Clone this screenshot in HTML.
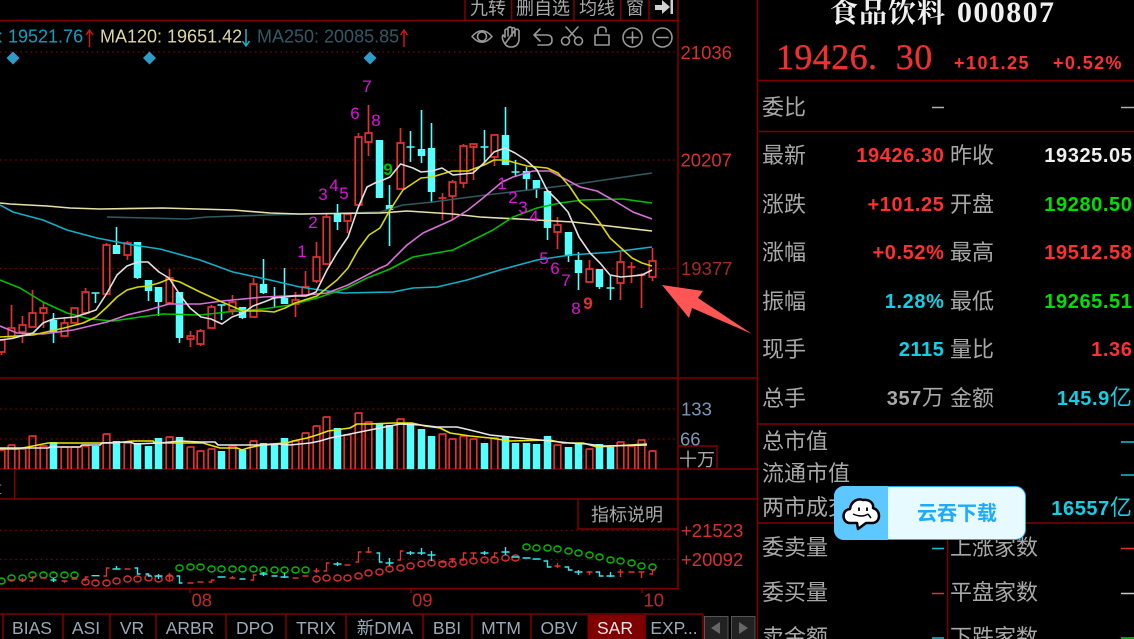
<!DOCTYPE html>
<html><head><meta charset="utf-8"><style>
html,body{margin:0;padding:0;background:#000;width:1134px;height:639px;overflow:hidden}
svg{display:block;font-family:"Liberation Sans","Noto Sans CJK SC",sans-serif}
.cn{font-size:22px;fill:#a8a8a8;font-family:"Noto Sans CJK SC",sans-serif}
.v{font-size:20px;font-weight:bold;letter-spacing:.6px;text-anchor:end}
.ax{font-size:18.5px;fill:#d83030}
.tab{font-size:17.5px;fill:#9aa8b6;text-anchor:middle}
.top{font-size:18px;fill:#a8a8a8;text-anchor:middle;font-family:"Noto Sans CJK SC",sans-serif}
.n{font-size:17px;fill:#e010e0;text-anchor:middle}
.m{fill:none;stroke-width:1.6;stroke-linejoin:round}
ellipse{rx:3.6px;ry:3px;fill:none;stroke-width:1.4}
</style></head><body>
<svg width="1134" height="639" viewBox="0 0 1134 639" xmlns="http://www.w3.org/2000/svg">
<rect width="1134" height="639" fill="#000"/>

<!-- frame -->
<g stroke="#800000" stroke-width="1.5" fill="none">
<path d="M0 20.5H678M678 0V589M757.5 0V639M0 378H757M0 469H757M0 499H757M0 588.5H678M14.7 469V499"/>
<path d="M465 0V20M511.7 0V20M574 0V20M620.7 0V20M649 0V20"/>
<path d="M678 446H717V469M578 499V529H678"/>
<path d="M190 588V593M411 588V593M642 588V593"/>
<path d="M757 80.5H1134M759 131.5H1134M757 424H1134M757 523H1134M947.6 523V639"/>
<path d="M0 614H703M3 614V639M63 614V639M110 614V639M156 614V639M226 614V639M286 614V639M346 614V639M423 614V639M472 614V639M531 614V639M645 614V639M703 614V639"/>
</g>
<g stroke="#800000" stroke-width="1.3" stroke-dasharray="1.5 3.6" fill="none">
<path d="M0 52H678M0 160H678M0 268.500H678M0 409H678M0 439H678M0 530.500H678M0 559.500H678"/>
</g>

<!-- top tabs -->
<text class="top" x="488" y="14.500">九转</text>
<text class="top" x="543" y="14.500">删自选</text>
<text class="top" x="597" y="14.500">均线</text>
<text class="top" x="635" y="14.500">窗</text>
<path d="M655 5H662V0L670 7L662 14V10H655ZM670.500 0H673V14H670.500Z" fill="#d0d0d0"/>

<!-- legend -->
<text x="-2" y="42.500" font-size="18" fill="#12a0c0">: 19521.76</text>
<path d="M89.500 47V31M86 35L89.500 30L93 35" fill="none" stroke="#c81818" stroke-width="1.5"/>
<text x="100" y="42.500" font-size="18" fill="#e0d8a0">MA120: 19651.42</text>
<path d="M246 29V45M242.500 41L246 46L249.500 41" fill="none" stroke="#20b0c8" stroke-width="1.500"/>
<text x="257" y="42.500" font-size="18" fill="#2f5a68">MA250: 20085.85</text>
<path d="M404 47V31M400.500 35L404 30L407.500 35" fill="none" stroke="#c81818" stroke-width="1.5"/>

<!-- tool icons -->
<g fill="none" stroke="#979797" stroke-width="1.6" stroke-linecap="round" stroke-linejoin="round">
<path d="M472 36.500Q482 25 492 36.500Q482 48 472 36.500Z"/><circle cx="482" cy="36.500" r="4.500"/>
<path d="M505 44Q501 38 503 35L505 37V30Q507 28 508 30V36M508 30V28Q510 26 512 28V36M512 28Q514 27 515 29V36M515 30Q518 28 519 31V40Q518 47 511 47Q507 47 505 44Z"/>
<path d="M540 29L534 35L540 41M534 35H547Q552 35 552 40Q552 45 547 45H538"/>
<circle cx="565.500" cy="41" r="4"/><circle cx="578.500" cy="41" r="4"/><path d="M568 38L578 27M576 38L566 27"/>
<path d="M595 35H609V45H595ZM598 35V30Q598 27 602 27Q606 27 606 30V32"/>
<circle cx="632.500" cy="37.500" r="9.500"/><path d="M627 37.500H638M632.500 32V43"/>
<circle cx="662.500" cy="37.500" r="9.500"/><path d="M657 37.500H668"/>
</g>

<!-- diamonds -->
<path d="M13 51.500L19.500 58L13 64.500L6.500 58ZM149.500 51.500L156 58L149.500 64.500L143 58ZM370 51.500L376.500 58L370 64.500L363.500 58Z" fill="#2e9cc8"/>

<!-- candles -->
<g transform="translate(-.5 0)">
<path fill="none" stroke="#e03030" stroke-width="1.7" d="M-1.300 340H5.300V352H-1.300ZM2 352V355M8.700 328H15.300V337H8.700ZM12 305V328M19.700 325H26.300V332H19.700ZM23 316V325M23 332V343M29.700 313H36.300V327H29.700ZM33 290V313M40.700 308H47.300V313H40.700ZM44 302V308M44 313V328M61.700 323H68.300V336H61.700ZM65 317V323M71.700 308H78.300V323H71.700ZM82.700 292H89.300V313H82.700ZM86 288V292M86 313V315M103.700 245H110.300V294H103.700ZM107 243V245M124.700 243H131.300V255H124.700ZM128 241V243M128 255V260M166.700 278H173.300V303H166.700ZM170 269V278M187.700 336H194.300V339H187.700ZM191 331V336M191 339V347M197.700 331H204.300V344H197.700ZM201 329V331M201 344V346M208.700 307H215.300V328H208.700ZM212 305V307M229.700 302H236.300V310H229.700ZM233 295V302M233 310V315M250.700 284H257.300V317H250.700ZM254 278V284M292.700 300H299.300V304H292.700ZM296 292V300M296 304V317M302.700 287H309.300V295H302.700ZM306 271V287M313.700 257H320.300V281H313.700ZM317 242V257M317 281V283M323.700 217H330.300V264H323.700ZM327 214V217M344.700 214H351.300V221H344.700ZM348 221V233M355.700 137H362.300V205H355.700ZM359 133V137M365.700 133H372.300V142H365.700ZM369 105V133M369 142V156M397.700 143H404.300V189H397.700ZM401 128V143M439 198H447M443 193V220M449.700 182H456.300V196H449.700ZM453 180V182M453 196V220M460.700 146H467.300V183H460.700ZM464 183V188M464 144V146M470.700 144H477.300V147H470.700ZM474 147V180M491.700 135H498.300V157H491.700ZM495 157V166M554.700 225H561.300V232H554.700ZM558 217V225M558 232V249M586.700 269H593.300V282H586.700ZM590 260V269M617.700 262H624.300V283H617.700ZM621 252V262M621 283V300M628 267H636M632 262V283M638 275H646M642 273V308M649.700 261H656.300V277H649.700ZM653 248V261M653 277V281"/>
<path fill="none" stroke="#54ffff" stroke-width="7.500" d="M54 320V333M117 245V254M138 242V278M149 280V291M159 287V302M180 292V338M243 307V318M264 284V293M285 298V304M338 214V222M380 140V198M390 205V210M422 149V156M432 148V192M506 135V165M527 171V179M537 180V189M548 191V228M569 232V256M579 260V273M600 269V287"/>
<path fill="none" stroke="#54ffff" stroke-width="1.600" d="M54 313V343M92 293H100M96 293V303M117 227V254M138 278V279M149 291V301M159 302V316M180 338V343M218 305H226M222 305V320M243 318V319M264 259V294M271 297H279M275 287V307M285 268V298M338 204V230M390 185V246M407 147H415M411 131V162M422 110V163M432 123V203M481 147H489M485 130V163M506 107V135M512 172H520M516 160V177M527 167V190M537 189V198M548 228V240M569 256V262M579 252V290M600 287V289M607 288H615M611 275V300"/>
</g>

<!-- moving averages -->
<polyline class="m" stroke="#2f5a60" points="107,217 187,219 207,217 267,215 380,212 403,205 433,202 470,197 503,193 570,185 652,173"/>
<polyline class="m" stroke="#e6e0a8" points="0,203 10,204 47,206 70,208 100,209 163,208 233,210 270,213 300,214 380,213 407,211 453,214 480,217 537,220 573,222 600,225 652,231"/>
<polyline class="m" stroke="#10b0c8" points="0,205 13,212 43,220 67,230 97,238 133,245 160,249 200,260 233,272 270,280 300,287 320,290 343,293 393,292 413,288 437,287 467,280 500,270 537,260 570,255 613,252 652,247"/>
<polyline class="m" stroke="#00c000" points="0,280 20,288 43,302 67,313 90,319 113,321 140,317 163,314 200,315 227,312 263,309 290,305 317,298 347,288 367,278 380,273 390,269 413,257 453,250 493,230 513,217 537,208 560,203 583,200 623,199 652,203"/>
<polyline class="m" stroke="#d870d8" points="0,326 17,333 43,334 73,330 107,322 127,315 148,310 169,304 200,304 222,301 243,299 263,297 285,296 306,295 327,293 348,285 367,275 380,268 387,265 407,245 423,233 452,220 468,210 483,198 502,182 513,177 533,171 550,171 567,180 580,187 597,191 613,200 633,212 652,219"/>
<polyline class="m" stroke="#d8d800" points="0,337 33,335 64,328 83,323 96,317 107,307 117,297 127,290 138,287 148,286 159,283 169,279 180,282 200,292 222,302 243,311 263,311 274,312 285,308 295,303 317,296 327,288 337,280 348,268 358,250 369,235 380,228 390,210 403,190 421,178 432,177 452,171 468,171 484,165 494,160 505,160 527,166 547,168 558,173 570,187 580,202 590,210 600,223 610,238 621,248 632,258 642,263 652,266"/>
<polyline class="m" stroke="#e0e0e0" points="0,340 12,338.500 33,333 43,323 53,319 75,317 96,310 107,293 117,275 127,266 138,262 148,262 159,272 169,278 180,295 190,308 201,317 211,319 222,324 232,317 243,313 253,306 264,302 274,298 285,297 295,296 306,296 316,292 327,270 337,253 348,237 358,208 367,187 377,182 383,180 390,177 400.600,164 413,168 421,172 432,171 442,168 453,175 463,174 473,173 484,163 494,152 505,148 515,153 526,160 537,170 547,190 558,201 568,212 579,237 590,253 600,263 610,275 621,277 632,276 642,275 652,270"/>

<!-- count numerals -->
<text class="n" x="367" y="92">7</text><text class="n" x="355" y="119">6</text><text class="n" x="376" y="126">8</text>
<text class="n" x="323" y="200">3</text><text class="n" x="334" y="191">4</text><text class="n" x="344" y="199">5</text>
<text class="n" x="313" y="228">2</text><text class="n" x="302" y="257">1</text>
<text class="n" x="388" y="175" style="fill:#00c000;font-weight:bold">9</text>
<text class="n" x="502" y="189">1</text><text class="n" x="513" y="203">2</text><text class="n" x="523" y="213">3</text><text class="n" x="534" y="222">4</text>
<text class="n" x="544" y="264">5</text><text class="n" x="555" y="274">6</text><text class="n" x="566" y="286">7</text><text class="n" x="576" y="314">8</text>
<text class="n" x="588" y="309" style="fill:#e03030;font-weight:bold">9</text>

<!-- callout arrow -->
<path d="M662 285L703 291L698 298L752 334L692 308L689 318Z" fill="#ff5555"/>

<!-- axis labels -->
<text class="ax" x="680.500" y="59">21036</text>
<text class="ax" x="680.500" y="166.500">20207</text>
<text class="ax" x="681" y="275" style="fill:#a82828">19377</text>
<text x="681" y="415.500" font-size="18.500" fill="#7c98b4">133</text>
<text x="680" y="445.500" font-size="18.500" fill="#7c98b4">66</text>
<text x="679" y="466" font-size="18" fill="#a8a8a8" font-family="Noto Sans CJK SC,sans-serif">十万</text>
<text class="ax" x="681" y="537">+21523</text>
<text class="ax" x="681" y="566">+20092</text>
<text x="591" y="521" font-size="18" fill="#a8a8a8" font-family="Noto Sans CJK SC,sans-serif">指标说明</text>
<text x="-14" y="493" font-size="16" fill="#a8a8a8" font-family="Noto Sans CJK SC,sans-serif">量</text>

<!-- volume -->
<g transform="translate(-.5 0)">
<path fill="none" stroke="#54ffff" stroke-width="7.500" d="M54 442V469M96 446V469M117 441V469M138 443V469M149 446V469M159 438V469M180 437V469M222 451V469M243 450V469M264 443V469M275 444V469M285 438V469M338 428V469M380 424V469M390 425V469M411 423V469M422 429V469M432 436V469M485 443V469M506 437V469M516 443V469M527 443V469M537 444V469M548 436V469M569 447V469M579 443V469M600 444V469M611 447V469"/>
<path fill="none" stroke="#e03030" stroke-width="1.7" d="M-1.300 450H5.300V469M-1.300 450V469M8.700 445H15.300V469M8.700 445V469M19.700 449H26.300V469M19.700 449V469M29.700 436H36.300V469M29.700 436V469M40.700 446H47.300V469M40.700 446V469M61.700 447H68.300V469M61.700 447V469M71.700 447H78.300V469M71.700 447V469M82.700 446H89.300V469M82.700 446V469M103.700 434H110.300V469M103.700 434V469M124.700 443H131.300V469M124.700 443V469M166.700 437H173.300V469M166.700 437V469M187.700 447H194.300V469M187.700 447V469M197.700 451H204.300V469M197.700 451V469M208.700 449H215.300V469M208.700 449V469M229.700 446H236.300V469M229.700 446V469M250.700 441H257.300V469M250.700 441V469M292.700 441H299.300V469M292.700 441V469M302.700 433H309.300V469M302.700 433V469M313.700 426H320.300V469M313.700 426V469M323.700 417H330.300V469M323.700 417V469M344.700 435H351.300V469M344.700 435V469M355.700 413H362.300V469M355.700 413V469M365.700 422H372.300V469M365.700 422V469M397.700 419H404.300V469M397.700 419V469M439.700 434H446.300V469M439.700 434V469M449.700 439H456.300V469M449.700 439V469M460.700 436H467.300V469M460.700 436V469M470.700 439H477.300V469M470.700 439V469M491.700 438H498.300V469M491.700 438V469M554.700 445H561.300V469M554.700 445V469M586.700 449H593.300V469M586.700 449V469M617.700 442H624.300V469M617.700 442V469M628.700 446H635.300V469M628.700 446V469M638.700 440H645.300V469M638.700 440V469M649.700 451H656.300V469M649.700 451V469"/>
</g>
<polyline class="m" stroke="#e8e800" points="0,449 17,449 28,447 38,445 48,443 100,443 113,443 133,441 153,441 155,443 203,443 213,446 220,448 237,448 242,450 248,448 257,446 270,444 287,443 293,441 307,438 317,435 328,431 350,428 357,424 370,424 393,423 412,423 425,426 440,428 450,433 470,436 490,438 510,441 550,440 563,443 583,443 597,447 647,444"/>
<polyline class="m" stroke="#e8e8e8" points="0,448 48,448 50,447 80,447 82,445 100,445 102,443 130,442 135,444 160,443 180,441 200,442 215,442 218,445 265,445 280,444 290,445 300,444 310,443 320,441 330,438 345,435 360,432 375,429 385,427 400,424 420,425 437,427 457,427 470,430 490,435 510,437 530,439 550,441 570,443 587,444 603,446 647,445"/>

<!-- SAR -->
<g transform="translate(-.5 0)">
<g stroke="#00c000">
<ellipse cx="2" cy="581"/><ellipse cx="12" cy="578"/><ellipse cx="23" cy="578"/><ellipse cx="33" cy="575"/><ellipse cx="44" cy="575"/><ellipse cx="54" cy="575"/><ellipse cx="65" cy="575"/><ellipse cx="75" cy="575"/><ellipse cx="180" cy="568"/><ellipse cx="191" cy="567"/><ellipse cx="201" cy="567"/><ellipse cx="212" cy="569"/><ellipse cx="222" cy="569"/><ellipse cx="233" cy="569"/><ellipse cx="243" cy="569"/><ellipse cx="254" cy="569"/><ellipse cx="264" cy="570"/><ellipse cx="275" cy="570"/><ellipse cx="285" cy="570"/><ellipse cx="296" cy="570"/><ellipse cx="306" cy="570"/><ellipse cx="527" cy="547"/><ellipse cx="537" cy="548"/><ellipse cx="548" cy="548"/><ellipse cx="558" cy="549"/><ellipse cx="569" cy="551"/><ellipse cx="579" cy="553"/><ellipse cx="590" cy="555"/><ellipse cx="600" cy="557"/><ellipse cx="611" cy="560"/><ellipse cx="621" cy="561"/><ellipse cx="632" cy="563"/><ellipse cx="642" cy="566"/><ellipse cx="653" cy="567"/>
</g>
<g stroke="#e03030">
<ellipse cx="86" cy="582"/><ellipse cx="96" cy="583"/><ellipse cx="107" cy="583"/><ellipse cx="117" cy="581"/><ellipse cx="128" cy="579"/><ellipse cx="138" cy="579"/><ellipse cx="149" cy="578"/><ellipse cx="159" cy="579"/><ellipse cx="170" cy="578"/><ellipse cx="317" cy="579"/><ellipse cx="327" cy="578"/><ellipse cx="338" cy="578"/><ellipse cx="348" cy="578"/><ellipse cx="359" cy="576"/><ellipse cx="369" cy="573"/><ellipse cx="380" cy="572"/><ellipse cx="390" cy="569"/><ellipse cx="401" cy="568"/><ellipse cx="411" cy="566"/><ellipse cx="422" cy="564"/><ellipse cx="432" cy="563"/><ellipse cx="443" cy="564"/><ellipse cx="453" cy="564"/><ellipse cx="464" cy="562"/><ellipse cx="474" cy="561"/><ellipse cx="485" cy="560"/><ellipse cx="495" cy="560"/><ellipse cx="506" cy="558"/><ellipse cx="516" cy="558"/>
</g>
<path fill="none" stroke="#e03030" stroke-width="1.400" d="M9 580H15M20 580H26M23 578V582M30 581H33V577H36M41 578H47M62 581H68M65 581V583M72 579H78M83 580H86V577H89M104 576H107V568H110M125 569H131M167 576H173M170 573V580M188 583H194M198 582H204M209 582H212V580H215M230 578H236M233 578V576M251 580H254V575H257M293 578H299M303 576H309M314 571H320M317 568V573M324 571H327V563H330M345 565H351M356 562H359V552H362M366 552H372M369 547V553M398 560H401V551H404M439 562H447M450 559H456M453 558V563M461 560H464V553H467M471 553H477M474 553V559M492 557H495V553H498M555 566H561M558 563V568M587 572H593M590 571V575M618 572H624M621 569V577M629 572H635M639 572H645M642 572V578M650 574H653V570H656"/>
<path fill="none" stroke="#30e8f0" stroke-width="1.400" d="M51 580H57M54 578V582M92 575.700H100M113 569H121M117 566V569M135 568H138V574H141M146 574H149V576H152M155 576H163M159 574V579M177 576H180V583H183M218 577H226M240 579H246M260 574H268M264 572V576M272 576H278M281 577H289M285 573V578M334 564H342M338 562V566M377 553H380V562H383M386 563H394M390 558V566M407 553H415M411 551V555M418 553H426M422 548V555M428 555H436M432 551V561M481 553H489M485 551V555M502 552H510M506 547V555M512 557H520M523 558H531M533 559H541M544 561H548V567H552M565 567H569V570H573M575 572H583M579 570V575M596 572H600V576H604M607 576H615M611 572V577"/>
</g>

<!-- date ticks -->
<text x="191.500" y="606.500" font-size="18.500" fill="#c02828">08</text>
<text x="412" y="606.500" font-size="18.500" fill="#c02828">09</text>
<text x="643.500" y="606.500" font-size="18.500" fill="#c02828">10</text>

<!-- bottom tabs -->
<rect x="587.500" y="615" width="57" height="24" fill="#800000"/>
<text class="tab" x="32" y="634">BIAS</text><text class="tab" x="86" y="634">ASI</text><text class="tab" x="132" y="634">VR</text><text class="tab" x="190" y="634">ARBR</text><text class="tab" x="255" y="634">DPO</text><text class="tab" x="316" y="634">TRIX</text><text class="tab" x="385" y="634">新DMA</text><text class="tab" x="447" y="634">BBI</text><text class="tab" x="501" y="634">MTM</text><text class="tab" x="559" y="634">OBV</text><text class="tab" x="615" y="634" style="fill:#e8e8e8">SAR</text><text class="tab" x="674" y="634">EXP...</text>
<rect x="704.500" y="616.500" width="23.500" height="23" fill="#222" stroke="#555"/>
<rect x="731.500" y="616.500" width="23.500" height="23" fill="#222" stroke="#555"/>
<path d="M720 622V634L711 628ZM739 622V634L748 628Z" fill="#666"/>

<!-- right panel header -->
<text x="830" y="22" font-size="28" font-weight="bold" fill="#f0f0f0" letter-spacing="1" font-family="Liberation Serif,Noto Serif CJK SC,serif">食品饮料</text>
<text x="957" y="22" font-size="30" font-weight="bold" fill="#f0f0f0" letter-spacing="1.400" font-family="Liberation Serif,serif">000807</text>
<text x="776" y="69" font-size="36" fill="#f03030" stroke="#f03030" stroke-width=".4" letter-spacing=".4" word-spacing="9" font-family="Liberation Serif,serif">19426. 30</text>
<text x="954" y="69" font-size="18" font-weight="bold" letter-spacing="1.500" fill="#ff3030">+101.25</text>
<text x="1053" y="69" font-size="18" font-weight="bold" letter-spacing="1.400" fill="#ff3030">+0.52%</text>

<!-- right rows -->
<text class="cn" x="762" y="115">委比</text>
<path d="M932 107.500H944M1121 107.500H1134" stroke="#b0b0b0" stroke-width="1.500"/>

<text class="cn" x="762" y="163">最新</text><text class="v" x="944.500" y="162" fill="#ff3030">19426.30</text><text class="cn" x="950" y="163">昨收</text><text class="v" x="1132.500" y="162" fill="#f0f0f0">19325.05</text>
<text class="cn" x="762" y="212">涨跌</text><text class="v" x="944.500" y="211" fill="#ff3030">+101.25</text><text class="cn" x="950" y="212">开盘</text><text class="v" x="1132.500" y="211" fill="#00e000">19280.50</text>
<text class="cn" x="762" y="260">涨幅</text><text class="v" x="944.500" y="259" fill="#ff3030">+0.52%</text><text class="cn" x="950" y="260">最高</text><text class="v" x="1132.500" y="259" fill="#ff3030">19512.58</text>
<text class="cn" x="762" y="309">振幅</text><text class="v" x="944.500" y="308" fill="#10d0e8">1.28%</text><text class="cn" x="950" y="309">最低</text><text class="v" x="1132.500" y="308" fill="#00e000">19265.51</text>
<text class="cn" x="762" y="357">现手</text><text class="v" x="944.500" y="356" fill="#10d0e8">2115</text><text class="cn" x="950" y="357">量比</text><text class="v" x="1132.500" y="356" fill="#ff3030">1.36</text>
<text class="cn" x="762" y="406">总手</text><text class="v" x="944.500" y="405" fill="#a8a8a8">357<tspan font-weight="normal" font-size="22" font-family="Noto Sans CJK SC,sans-serif">万</tspan></text><text class="cn" x="950" y="406">金额</text><text class="v" x="1132.500" y="405" fill="#10d0e8">145.9<tspan font-weight="normal" font-size="22" font-family="Noto Sans CJK SC,sans-serif">亿</tspan></text>

<text class="cn" x="762" y="449">总市值</text><text class="cn" x="762" y="481">流通市值</text><text class="cn" x="762" y="515">两市成交</text>
<text class="v" x="1132.500" y="515" fill="#10d0e8">16557<tspan font-weight="normal" font-size="22" font-family="Noto Sans CJK SC,sans-serif">亿</tspan></text>
<path d="M1121 442H1134M1121 475H1134" stroke="#10c0d8" stroke-width="1.500"/>

<text class="cn" x="762" y="555">委卖量</text><text class="cn" x="762" y="600">委买量</text><text class="cn" x="762" y="645">卖金额</text>
<text class="cn" x="950" y="555">上涨家数</text><text class="cn" x="950" y="600">平盘家数</text><text class="cn" x="950" y="645">下跌家数</text>
<path d="M932 548.500H944M932 638H944" stroke="#10c0d8" stroke-width="1.500"/>
<path d="M932 593.500H944M1121 548.500H1134" stroke="#e03030" stroke-width="1.500"/>
<path d="M1121 593.500H1134" stroke="#c8c8c8" stroke-width="1.500"/>
<path d="M1121 638H1134" stroke="#00e000" stroke-width="1.500"/>

<!-- popup -->
<rect x="834.500" y="486.500" width="191" height="53" rx="10" fill="#e6faff" stroke="#22aaf0"/>
<path d="M888 486H844.500A10 10 0 0 0 834 496.500V529.500A10 10 0 0 0 844.500 540H888Z" fill="#5cc8ff"/>
<text x="957" y="520" font-size="20" font-weight="bold" fill="#1eaaff" text-anchor="middle" font-family="Noto Sans CJK SC,sans-serif">云吞下载</text>
<path d="M849 523C842 522 841 510 850 509C851 501 858 498 863 500C869 499 874 503 873 508C881 510 881 522 873 523L866 523L858 529L857 523Z" fill="#fff" stroke="#000" stroke-width="2.500" stroke-linejoin="round"/>
<path d="M859 507.500V511M867 507.500V511" stroke="#000" stroke-width="1.800" fill="none"/>
<path d="M853 514Q862 518 868 514M868 514L871 518" fill="none" stroke="#000" stroke-width="1.500"/>
</svg>
</body></html>
